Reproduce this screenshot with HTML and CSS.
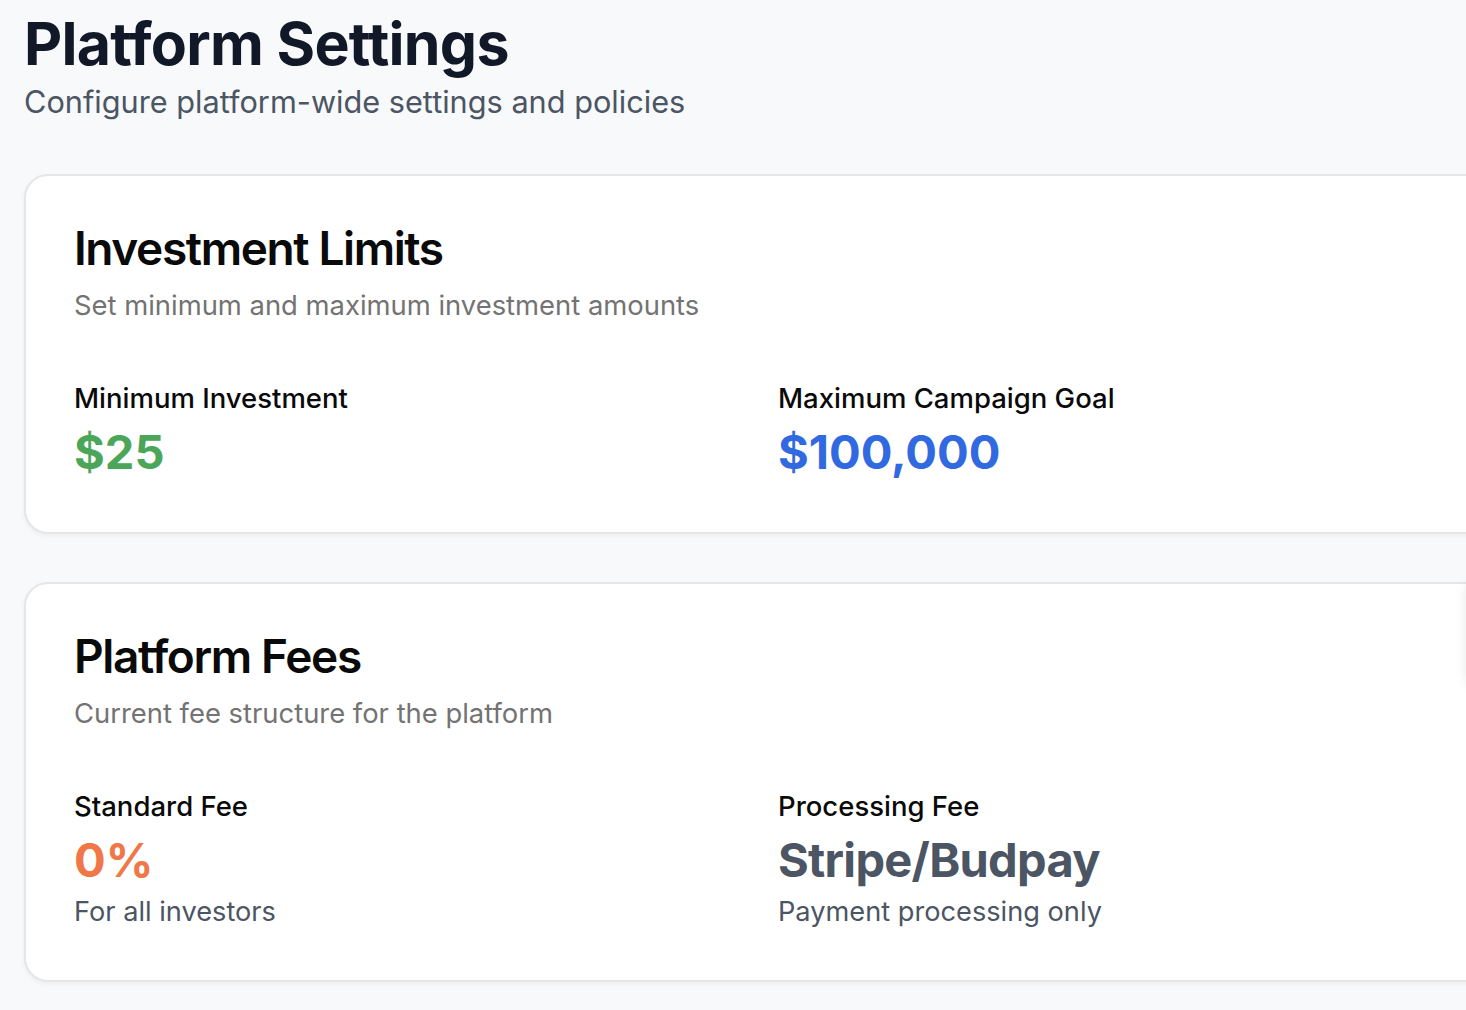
FILE: index.html
```html
<!DOCTYPE html>
<html lang="en">
<head>
<meta charset="utf-8">
<title>Platform Settings</title>
<link rel="stylesheet" href="styles.css">
</head>
<body>
<main class="page">
  <header class="page-header">
    <h1 class="page-title">Platform Settings</h1>
    <p class="page-subtitle">Configure platform-wide settings and policies</p>
  </header>

  <section class="card">
    <div class="card-header">
      <h2 class="card-title">Investment Limits</h2>
      <p class="card-desc">Set minimum and maximum investment amounts</p>
    </div>
    <div class="card-content grid-2">
      <div class="stat">
        <div class="stat-label">Minimum Investment</div>
        <div class="stat-value green">$25</div>
      </div>
      <div class="stat">
        <div class="stat-label">Maximum Campaign Goal</div>
        <div class="stat-value blue">$100,000</div>
      </div>
    </div>
  </section>

  <section class="card">
    <div class="card-header">
      <h2 class="card-title">Platform Fees</h2>
      <p class="card-desc">Current fee structure for the platform</p>
    </div>
    <div class="card-content grid-2">
      <div class="stat">
        <div class="stat-label">Standard Fee</div>
        <div class="stat-value orange">0%</div>
        <div class="stat-note">For all investors</div>
      </div>
      <div class="stat">
        <div class="stat-label">Processing Fee</div>
        <div class="stat-value slate">Stripe/Budpay</div>
        <div class="stat-note">Payment processing only</div>
      </div>
    </div>
  </section>
</main>
<div class="edge-panel"></div>
</body>
</html>
```

FILE: styles.css
```css
html, body {
  margin: 0;
  padding: 0;
  overflow: hidden;
}

body {
  background: #f8f9fb;
  font-family: Inter, "Noto Sans", "Liberation Sans", sans-serif;
  color: #0a0a0a;
  width: 1466px;
  height: 1010px;
  position: relative;
}

.page {
  padding: 8px 0 0 24px;
  width: 1470px;
  display: flex;
  flex-direction: column;
}

.page-header {
  margin-bottom: 48px;
}

.page-title {
  margin: 0;
  font-size: 59px;
  line-height: 72px;
  font-weight: 700;
  color: #111827;
  letter-spacing: -0.012em;
}

.page-subtitle {
  margin: -2px 0 0;
  font-size: 30.7px;
  line-height: 48px;
  color: #4b5563;
}

.card {
  background: #ffffff;
  border: 2px solid #e6e6e6;
  border-radius: 24px;
  box-shadow: 0 2px 4px rgba(0, 0, 0, 0.05);
  margin-bottom: 48px;
}

.card-header {
  padding: 48px 48px 48px 48px;
  display: flex;
  flex-direction: column;
  gap: 13px;
}

.card-title {
  margin: 0;
  font-size: 46px;
  line-height: 48px;
  font-weight: 600;
  letter-spacing: -0.03em;
  color: #0a0a0a;
}

.card-desc {
  margin: 0;
  font-size: 27.4px;
  line-height: 40px;
  color: #737373;
}

.card-content {
  padding: 0 48px 48px 48px;
}

.grid-2 {
  display: grid;
  grid-template-columns: 656px 656px;
  column-gap: 48px;
}

.stat {
  display: flex;
  flex-direction: column;
}

.stat-label {
  margin-top: 5px;
  font-size: 27.5px;
  line-height: 40px;
  font-weight: 500;
  color: #0a0a0a;
}

.stat-value {
  margin-top: 2px;
  font-size: 47px;
  line-height: 64px;
  font-weight: 700;
}

.stat-note {
  font-size: 27.2px;
  line-height: 40px;
  color: #4b5563;
}

.green { color: #4ca65a; }
.blue { color: #3169e1; }
.orange { color: #f07848; }
.slate { color: #4b5563; letter-spacing: -0.015em; }

.edge-panel {
  position: absolute;
  left: 1470px;
  top: 586px;
  width: 200px;
  height: 96px;
  background: #ffffff;
  box-shadow: 0 0 14px rgba(0, 0, 0, 0.18);
}
```
